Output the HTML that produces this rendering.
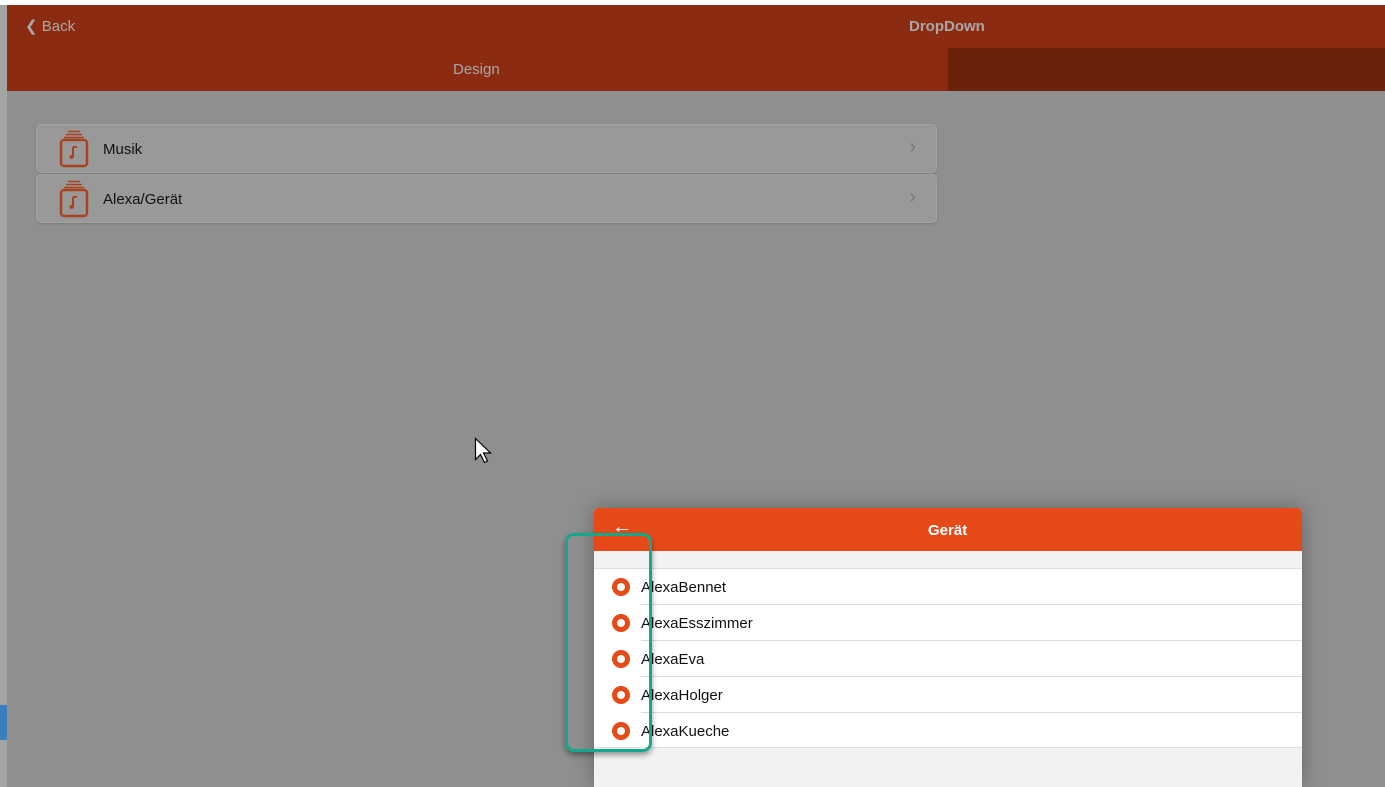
<!DOCTYPE html>
<html><head><style>
*{margin:0;padding:0;box-sizing:border-box}
body{width:1385px;height:787px;overflow:hidden;background:#8f8f8f;font-family:"Liberation Sans",sans-serif;position:relative}
.a{position:absolute}
.card{position:absolute;left:36px;width:901px;height:49px;background:#999;border:1px solid #a3a3a3;border-radius:5px;box-shadow:0 1px 2px rgba(0,0,0,.15)}
.card span{position:absolute;left:66px;top:16px;font-size:15px;color:#111}
.card .ch{position:absolute;right:20px;top:11px;color:#777;font-size:20px}
.row{position:absolute;left:0;width:708px;height:36px}
.row .dot{position:absolute;left:18px;top:9px;width:18px;height:18px;border-radius:50%;background:#e64a19}
.row .dot:after{content:"";position:absolute;left:5px;top:5px;width:8px;height:8px;border-radius:50%;background:#fff}
.row span{position:absolute;left:47px;top:10px;font-size:15px;color:#111}
.row .ln{position:absolute;left:47px;right:0;bottom:0;height:1px;background:#dcdcdc}
</style></head><body>
<div class="a" style="left:0;top:0;width:1385px;height:5px;background:#fff"></div>
<div class="a" style="left:0;top:5px;width:7px;height:782px;background:#a4a4a4"></div>
<div class="a" style="left:0;top:705px;width:7px;height:35px;background:#3b7ec0"></div>
<div class="a" style="left:7px;top:5px;width:1378px;height:43px;background:#8b2b11"></div>
<div class="a" style="left:7px;top:48px;width:941px;height:43px;background:#8b2b11"></div>
<div class="a" style="left:948px;top:48px;width:437px;height:43px;background:#6c210c"></div>
<div class="a" style="left:25px;top:17px;font-size:15px;color:#a8a8a8">&#10094; Back</div>
<div class="a" style="left:909px;top:18px;font-size:15px;font-weight:bold;color:#a8a8a8">DropDown</div>
<div class="a" style="left:453px;top:61px;font-size:15px;color:#a8a8a8">Design</div>
<div class="card" style="top:124px">
<svg class="a" style="left:22px;top:5px" width="30" height="38" viewBox="0 0 30 38"><path d="M9 1.5h12M7 4.5h16M5 7.5h20" stroke="#a9421f" stroke-width="1.5"/><rect x="2" y="10" width="26" height="26" rx="3" fill="none" stroke="#a9421f" stroke-width="2.5"/><path d="M14 17v10M14 17h4" stroke="#a9421f" stroke-width="2"/><circle cx="12.5" cy="27" r="2" fill="#a9421f"/></svg>
<span>Musik</span><div class="ch">&#8250;</div></div>
<div class="card" style="top:174px">
<svg class="a" style="left:22px;top:5px" width="30" height="38" viewBox="0 0 30 38"><path d="M9 1.5h12M7 4.5h16M5 7.5h20" stroke="#a9421f" stroke-width="1.5"/><rect x="2" y="10" width="26" height="26" rx="3" fill="none" stroke="#a9421f" stroke-width="2.5"/><path d="M14 17v10M14 17h4" stroke="#a9421f" stroke-width="2"/><circle cx="12.5" cy="27" r="2" fill="#a9421f"/></svg>
<span>Alexa/Gerät</span><div class="ch">&#8250;</div></div>
<svg class="a" style="left:474px;top:437px" width="20" height="28" viewBox="0 0 20 28"><path d="M1.5 1.5v21l5-5 4 8 3-1.5-4-8h7z" fill="#fff" stroke="#000" stroke-width="1.2"/></svg>
<div class="a" style="left:594px;top:508px;width:708px;height:279px;background:#f2f2f2;border-radius:4px 4px 0 0;box-shadow:0 0 20px rgba(0,0,0,.3);overflow:hidden">
<div class="a" style="left:0;top:0;width:708px;height:43px;background:#e64a19"></div>
<div class="a" style="left:18px;top:8px;color:#fff;font-size:20px">&#8592;</div>
<div class="a" style="left:334px;top:14px;color:#fff;font-size:15px;font-weight:bold">Gerät</div>
<div class="a" style="left:0;top:60px;width:708px;height:180px;background:#fff;border-top:1px solid #ddd;border-bottom:1px solid #ddd">
<div class="row" style="top:0"><div class="dot"></div><span>AlexaBennet</span><div class="ln"></div></div>
<div class="row" style="top:36px"><div class="dot"></div><span>AlexaEsszimmer</span><div class="ln"></div></div>
<div class="row" style="top:72px"><div class="dot"></div><span>AlexaEva</span><div class="ln"></div></div>
<div class="row" style="top:108px"><div class="dot"></div><span>AlexaHolger</span><div class="ln"></div></div>
<div class="row" style="top:144px"><div class="dot"></div><span>AlexaKueche</span></div>
</div></div>
<div class="a" style="left:565px;top:533px;width:87px;height:219px;border:3px solid #14a88a;border-radius:9px;box-shadow:0 3px 6px rgba(0,0,0,.4)"></div>
</body></html>
